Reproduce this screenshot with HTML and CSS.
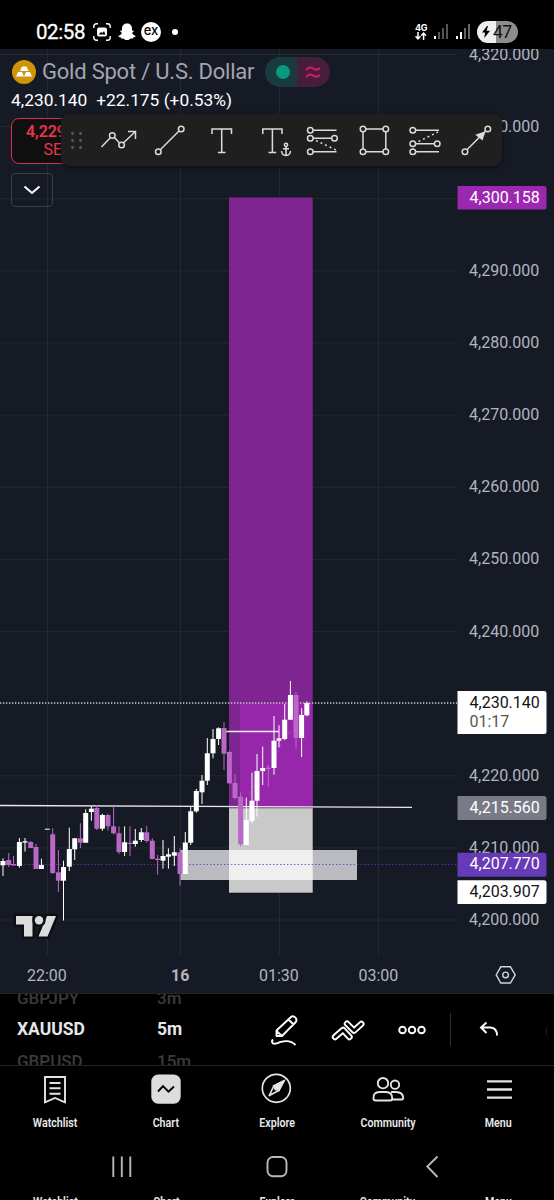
FILE: index.html
```html
<!DOCTYPE html>
<html lang="en">
<head>
<meta charset="utf-8">
<title>XAUUSD chart</title>
<link rel="stylesheet" href="styles.css">
</head>
<body>
<div class="phone">
  <header class="status">
    <span class="clock">02:58</span>
    <svg class="st-shot" width="18" height="18" viewBox="0 0 18 18" fill="none" stroke="#fff" stroke-width="1.4"><path d="M.8 5V3.5Q.8.8 3.5.8H5M13 .8h1.500Q17.200.8 17.200 3.500V5M17.200 13v1.500q0 2.700-2.700 2.700H13M5 17.200H3.500Q.8 17.200.8 14.500V13"/><rect x="4" y="4.500" width="10" height="9" rx="2" fill="#fff" stroke="none"/><path d="M5.500 11.500 8 9l1.500 1L11 8l1.500 3.500z" fill="#000" stroke="none"/></svg>
    <svg class="st-ghost" width="18" height="18" viewBox="0 0 18 18" fill="#fff"><path d="M9 .4c3 0 5 2 5 5v2.200c.6.2 1.400-.3 1.700.3.300.8-1.300 1.200-1.600 1.800.6 1.700 1.900 2.800 3.500 3.200.3.900-1.200 1.100-2.200 1.400l-.5 1.200c-1-.2-2-.2-2.900.4-1.900 1.600-4.100 1.600-6 0-.9-.6-1.900-.6-2.900-.4l-.5-1.200c-1-.3-2.500-.5-2.200-1.400 1.600-.4 2.900-1.500 3.500-3.200-.3-.6-1.900-1-1.600-1.800.3-.6 1.100-.1 1.700-.3V5.400c0-3 2-5 5-5z"/></svg>
    <span class="ex">ex</span>
    <i class="dot"></i>
    <span class="fourg"><b>4G</b><svg width="12" height="8" viewBox="0 0 12 8" fill="none" stroke="#fff" stroke-width="1.500"><path d="M3 0v7M.6 4.300 3 6.900l2.400-2.600M8.600 8V1M6.200 3.700 8.600 1.100 11 3.700"/></svg></span>
    <svg class="sig" width="16" height="16" viewBox="0 0 16 16"><path fill="#fff" d="M1 12h2v3H1z"/><path fill="#555" d="M5 8h2v7H5zM9 4h2v11H9zM13 0h2v15h-2z"/></svg>
    <svg class="sig" width="16" height="16" viewBox="0 0 16 16"><path fill="#fff" d="M1 12h2v3H1zM5 8h2v7H5z"/><path fill="#666" d="M9 4h2v11H9zM13 0h2v15h-2z"/></svg>
    <span class="battery"><svg width="8" height="12" viewBox="0 0 8 12"><path d="M5 0 0 6.500h3L2.300 12 8 4.800H4.600L6 0z"/></svg>47</span>
  </header>

  <main class="chart">
    <svg class="plot" width="554" height="945" viewBox="0 49 554 945">
      <g id="grid" class="grid"></g>
      <rect x="229" y="197.500" width="83.700" height="610.500" fill="#7e2591"/>
      <rect x="240" y="703" width="72.700" height="105" fill="#9727aa"/>
      <path d="M240 808 309 703" stroke="#ad67bd" stroke-dasharray="4 4" opacity=".6"/>
      <rect x="180.500" y="850" width="176.500" height="30" fill="#babbc0"/>
      <rect x="229" y="808" width="83.700" height="84.700" fill="#c9c9ca"/>
      <rect x="229" y="850" width="83.700" height="30" fill="#efeff0"/>
      <path d="M0 864.500H457" stroke="#673ab7" stroke-width="1" stroke-dasharray="1.500 2" opacity=".8"/>
      <path d="M0 805.500 412 807.300" stroke="#e8e8ea" stroke-width="1.300"/>
      <path d="M229 808H312.700" stroke="#87818c" stroke-width="1"/>
      <path d="M225 731.500H279" stroke="#eee" stroke-width="1.300"/>
      <path d="M0 703H457" stroke="#c6c7cb" stroke-width="1.300" stroke-dasharray="1.300 1.700"/>
      <g id="candles"></g>
      <g class="logo"><path d="M16 916H32.500V936.500H24V924.500H16zM47 916H56L47.500 936.500H38.500z"/><circle cx="39" cy="920.200" r="4.200"/></g>
      <g id="axis" class="axis"></g>
      <g class="tags">
        <path d="M457.500 186H544q2.500 0 2.500 2.500V207q0 2.500-2.500 2.500H457.500z" fill="#9c27b0"/><text x="469.500" y="202.800">4,300.158</text>
        <path d="M457.500 691H544q2.500 0 2.500 2.500V731.500q0 2.500-2.500 2.500H457.500z" fill="#fff"/><text x="469.500" y="707.600" class="dark">4,230.140</text><text x="469.500" y="726.600" class="mid">01:17</text>
        <path d="M457.500 796H544q2.500 0 2.500 2.500V817.500q0 2.500-2.500 2.500H457.500z" fill="#787b86"/><text x="469.500" y="812.700">4,215.560</text>
        <path d="M457.500 852.700H544q2.500 0 2.500 2.500V874.200q0 2.500-2.500 2.500H457.500z" fill="#673ab7"/><text x="469.500" y="869.200">4,207.770</text>
        <path d="M457.500 880.200H544q2.500 0 2.500 2.500V901.500q0 2.500-2.500 2.500H457.500z" fill="#fff"/><text x="469.500" y="896.800" class="dark">4,203.907</text>
      </g>
      <g class="axis"><text x="27" y="980.500">22:00</text><text x="171" y="980.500" class="bold">16</text><text x="259" y="980.500">01:30</text><text x="358.500" y="980.500">03:00</text></g>
      <g fill="none" stroke="#d1d4dc" stroke-width="1.400"><path d="M500.800 966.800H510.400L515.200 974.900 510.400 983H500.800L496.200 974.900z"/><circle cx="505.600" cy="974.900" r="2.800"/></g>
    </svg>

    <section class="legend">
      <div class="symbol">
        <svg width="24" height="24" viewBox="0 0 24 24"><circle cx="12" cy="12" r="12" fill="#cf9408"/><path fill="#fff" d="M10 6.500h4.500L16.500 11H8zM6 12h4l2 4.500H4zM14 12h4l2 4.500h-8z"/></svg>
        <h1>Gold Spot / U.S. Dollar</h1>
        <span class="pill"><i class="open"><b></b></i><i class="approx"><svg width="16" height="13" viewBox="0 0 16 13" fill="none" stroke="#d81b68" stroke-width="2"><path d="M1 4Q4.500 0 8 2.500T15 2M1 11Q4.500 7 8 9.500T15 9"/></svg></i></span>
      </div>
      <p class="quote"><span>4,230.140</span><span>+22.175 (+0.53%)</span></p>
      <div class="sell"><b>4,229</b><span>SELL</span></div>
      <div class="collapse"><svg width="18" height="10" viewBox="0 0 18 10" fill="none" stroke="#fff" stroke-width="2"><path d="M1.500 1.500 9 8l7.500-6.500"/></svg></div>
    </section>

    <nav class="tools">
      <svg width="441" height="52" viewBox="61 114 441 52" fill="none" stroke="#dbdbdb" stroke-width="1.500">
        <g fill="#5c5c5c" stroke="none"><circle cx="72.500" cy="133.500" r="1.400"/><circle cx="80.500" cy="133.500" r="1.400"/><circle cx="72.500" cy="140.500" r="1.400"/><circle cx="80.500" cy="140.500" r="1.400"/><circle cx="72.500" cy="147.500" r="1.400"/><circle cx="80.500" cy="147.500" r="1.400"/></g>
        <path d="M101.500 147 110 138M114.500 137.500 119.300 142.800M123.500 142.800 135.500 131.500M128 131.500H135.500V139"/><circle cx="112.300" cy="135.500" r="2.800"/><circle cx="121.600" cy="145" r="2.800"/>
        <path d="M160.500 149.500 179 131"/><circle cx="158.300" cy="151.700" r="2.800"/><circle cx="181.200" cy="129" r="2.800"/>
        <path d="M212 134V129H231.500V134M221.700 129V152.500M218 152.500H225.500"/>
        <path d="M262.800 134V129H282V134M272.400 129V152.500M268.500 152.500H276.200"/>
        <g><circle cx="286" cy="144.800" r="1.600"/><path d="M286 146.400V155.500M283 148.700H289M281.500 151Q282 155.500 286 155.500T290.500 151"/></g>
        <path d="M313 130.300H336.500M313 138.300H331.500M313 151.700H336.500"/><path d="M316 140.500 336 150" stroke-dasharray="2 3"/>
        <path d="M365.800 129H383M363 132V149M365.800 151.700H383M385.800 132V149"/><circle cx="363" cy="129" r="2.800"/><circle cx="385.800" cy="129" r="2.800"/><circle cx="363" cy="151.700" r="2.800"/><circle cx="385.800" cy="151.700" r="2.800"/>
        <path d="M416 130.300H439M416 143.700H434M416 151.700H439"/><path d="M418.500 141.500 438 132" stroke-dasharray="2 3"/>
        <g fill="#1f1f1f"><circle cx="310.300" cy="130.300" r="2.800"/><circle cx="310.300" cy="138.300" r="2.800"/><circle cx="334.500" cy="138.300" r="2.800"/><circle cx="310.300" cy="151.700" r="2.800"/><circle cx="412.800" cy="130.300" r="2.800"/><circle cx="412.800" cy="143.700" r="2.800"/><circle cx="437.200" cy="143.700" r="2.800"/><circle cx="412.800" cy="151.700" r="2.800"/></g>
        <path d="M467.200 149.500 485.500 131.300"/><circle cx="465" cy="151.700" r="2.800"/><circle cx="487.800" cy="129" r="2.800"/><path d="M485.500 131.300 482.500 140.500 475.300 134.700z" fill="#dbdbdb" stroke="none"/>
      </svg>
    </nav>
  </main>

  <section class="picker">
    <div class="wheel symbols"><span>GBPJPY</span><strong>XAUUSD</strong><span>GBPUSD</span></div>
    <div class="wheel frames"><span>3m</span><strong>5m</strong><span>15m</span></div>
    <div class="actions">
      <svg width="28" height="32" viewBox="270 1014 28 32" fill="none" stroke="#fff" stroke-width="1.900" stroke-linejoin="round"><path d="M276.500 1036V1030.500L291 1017Q293 1015.200 295.200 1017.400T295.800 1022L282 1036zM276.500 1031 282 1036M288.500 1019.500 293.500 1024.500" /><path d="M273 1039.500Q271 1041.500 273 1043.500 275 1044.500 280 1042.200 290 1039 295.500 1045"/></svg>
      <svg width="34" height="22" viewBox="331 1018 34 22" fill="none" stroke-linecap="round" stroke-linejoin="round"><path d="M347 1022.700 354 1029.700 361.300 1023" stroke="#fff" stroke-width="6.400"/><path d="M347 1022.700 354 1029.700 361.300 1023" stroke="#000" stroke-width="2.600"/><path d="M335 1036 343 1029 349.500 1036" stroke="#fff" stroke-width="6.400"/><path d="M335 1036 343 1029 349.500 1036" stroke="#000" stroke-width="2.600"/></svg>
      <svg width="28" height="10" viewBox="0 0 28 10" fill="none" stroke="#fff" stroke-width="1.900"><circle cx="4.500" cy="5" r="3.300"/><circle cx="14" cy="5" r="3.300"/><circle cx="23.500" cy="5" r="3.300"/></svg>
      <i class="divider"></i>
      <svg class="undo" width="20" height="18" viewBox="0 0 20 18" fill="none" stroke="#fff" stroke-width="1.900"><path d="M7.500 1.500 2 6.500 7.500 12M2 6.500H11.500Q18 7 18 14.500"/></svg>
      <i class="redo"></i>
    </div>
  </section>

  <nav class="tabs">
    <a><svg width="32" height="32" viewBox="0 0 32 32" fill="none" stroke="#e4e4e4" stroke-width="1.900"><path d="M6 4H26V29.300L16 25 6 29.300zM10.500 10H21.500M10.500 15.300H21.500M10.500 20.700H21.500"/></svg><span>Watchlist</span></a>
    <a><svg width="32" height="32" viewBox="0 0 32 32" fill="none"><rect x="1.300" y="1.500" width="29.400" height="29.300" rx="7" fill="#dcdcdc"/><path d="M8 18.500 13 13.200 18.500 18.700 24 13.500" stroke="#000" stroke-width="1.900"/></svg><span>Chart</span></a>
    <a><svg width="32" height="32" viewBox="0 0 32 32" fill="none" stroke="#e4e4e4" stroke-width="1.700"><circle cx="15.300" cy="15.300" r="14"/><path d="M22.800 8 17.800 17.500 8.300 22.500 12.800 13z" stroke-linejoin="round"/><path d="M22.800 8 17.800 17.500 12.800 13z" fill="#e4e4e4"/><circle cx="15.300" cy="15.300" r="1.500" fill="#e4e4e4"/></svg><span>Explore</span></a>
    <a><svg width="34" height="32" viewBox="0 0 34 32" fill="none" stroke="#e4e4e4" stroke-width="1.900"><circle cx="12" cy="10.200" r="5.200"/><path d="M2.500 25.500Q2 19.200 8.500 19H15Q21.500 19.200 21.200 25.500Q21.200 27.500 19 27.500H4.700Q2.500 27.500 2.500 25.500z"/><circle cx="24" cy="11.700" r="4.200"/><path d="M20 19H25Q32 19.200 32.200 25Q32.200 26.500 30.500 26.500H21"/></svg><span>Community</span></a>
    <a><svg width="32" height="32" viewBox="0 0 32 32" stroke="#e4e4e4" stroke-width="2.300"><path d="M4 8.300H29M4 16.500H29M4 24.600H29"/></svg><span>Menu</span></a>
  </nav>

  <nav class="system">
    <svg width="554" height="60" viewBox="0 1136 554 60" fill="none" stroke="#b8b8b8" stroke-width="1.900"><path d="M113.300 1156.500V1177M121.800 1156.500V1177M130.300 1156.500V1177"/><rect x="267.500" y="1157" width="19" height="19.300" rx="5.500"/><path d="M437.500 1156.500 427.300 1166.500 437.500 1177"/></svg>
  </nav>
  <div class="tabs-edge"><span>Watchlist</span><span>Chart</span><span>Explore</span><span>Community</span><span>Menu</span></div>
</div>
<script src="chart.js"></script>
</body>
</html>
```

FILE: styles.css
```css
* { box-sizing: border-box; }
body { margin: 0; background: #000; font-family: Roboto, sans-serif; color: #fff; }
.phone { width: 554px; height: 1200px; overflow: hidden; display: flex; flex-direction: column; background: #000; }
svg { display: block; flex: none; }
i { font-style: normal; }

.status { height: 49px; padding: 14px 0 0 36px; display: flex; align-items: center; flex: none; }
.clock { font-size: 20.500px; width: 57px; font-weight: 400; -webkit-text-stroke: .3px #fff; letter-spacing: -.4px; }
.st-ghost { margin-left: 7px; }
.ex { width: 20px; height: 20px; margin-left: 5px; border-radius: 50%; background: #fff; color: #000; font: 500 13px/17px Inter, sans-serif; text-align: center; }
.dot { width: 6px; height: 6px; border-radius: 50%; background: #fff; margin-left: 11px; }
.fourg { margin-left: 236px; width: 14px; display: flex; flex-direction: column; align-items: center; }
.fourg b { font: 700 9px/9px Inter, sans-serif; letter-spacing: -.4px; }
.sig { margin-left: 5px; }
.sig + .sig { margin-left: 6px; }
.battery { margin-left: 6px; width: 41px; height: 22px; border-radius: 11px; background: linear-gradient(90deg, #eee 47%, #8d8d8d 47%); color: #111; display: flex; align-items: center; gap: 3px; padding-left: 5px; font-size: 17.500px; letter-spacing: -.5px; }

.chart { position: relative; height: 945px; flex: none; background: #161a25; border-bottom: 1px solid #26272c; }
.plot { position: absolute; left: 0; top: 0; font-size: 16px; }
.grid { stroke: #242833; stroke-width: 1; }
.axis { fill: #b2b5be; }
.bold { font-weight: 700; }
.tags { fill: #fff; }
.dark { fill: #131313; }
.mid { fill: #555; }
.logo { fill: #dcdcdc; stroke: #0d0f14; stroke-width: 5px; paint-order: stroke; stroke-linejoin: round; }
.up { fill: #fff; }
.down { fill: #ba68c8; }

.legend { position: relative; padding: 10px 0 0 12px; }
.symbol { display: flex; align-items: center; height: 26px; }
.symbol h1 { margin: 0 0 0 6px; width: 212px; font-size: 22px; letter-spacing: -.22px; font-weight: 400; line-height: 26px; color: #a3a5b1; white-space: nowrap; }
.pill { margin-left: 11px; display: flex; height: 30px; border-radius: 15px; overflow: hidden; }
.pill i { display: flex; align-items: center; justify-content: center; }
.open { width: 32px; padding-left: 4px; background: #193a3e; }
.open b { width: 14px; height: 14px; border-radius: 50%; background: #089981; }
.approx { width: 33px; background: #461d3b; padding-right: 2px; }
.quote { margin: 5px 0 0 -1px; display: flex; gap: 9px; font-size: 17.350px; line-height: 21px; }
.sell { margin: 7px 0 0 -1px; width: 100px; height: 46px; border: 1px solid #d2324b; border-radius: 8px; background: #101010; color: #e8374a; font-size: 16px; line-height: 18px; padding: 4px 0 0 14px; display: flex; flex-direction: column; }
.sell b { font-weight: 500; -webkit-text-stroke: .2px #e8374a; }
.sell span { padding-left: 17.500px; }
.collapse { margin: 9px 0 0 -1px; width: 42px; height: 34px; border: 1px solid #3b3e46; border-radius: 4px; display: flex; align-items: center; justify-content: center; }
.tools { position: absolute; left: 61px; top: 65px; width: 441px; height: 52px; border-radius: 8px; background: #1f1f1f; box-shadow: 0 1px 4px #0008; }

.picker { height: 72px; flex: none; display: flex; border-bottom: 1px solid #242424; overflow: hidden; }
.wheel { height: 72px; display: flex; flex-direction: column; justify-content: center; font-size: 17.500px; line-height: 31.500px; padding-left: 17px; font-weight: 500; color: #3b3b3b; }
.wheel span, .wheel strong { flex: none; }
.wheel span { font-size: 17px; }
.wheel strong { font-weight: 700; color: #e6e6e6; }
.symbols { width: 140px; }
.frames { width: 130px; }
.actions { display: flex; align-items: center; }
.actions svg + svg { margin-left: 33px; }
.divider { width: 1px; height: 33px; background: #303030; margin: 0 28px 0 24px; }
.redo { width: 4px; height: 10px; border-left: 1px solid #1c1c1c; border-radius: 4px 0 0 0; margin-left: 47px; }

.tabs { height: 70px; flex: none; display: grid; grid-template-columns: repeat(5, 110.800px); padding-top: 7px; }
.tabs a { display: flex; flex-direction: column; align-items: center; font-size: 12px; font-weight: 600; line-height: 16px; gap: 10px; color: #e9e9e9; }
.tabs span, .tabs-edge span { transform: scaleX(.89); }
.system { height: 60px; flex: none; }
.tabs-edge { height: 4px; flex: none; overflow: hidden; display: grid; grid-template-columns: repeat(5, 110.800px); text-align: center; font-size: 12px; font-weight: 600; line-height: 12px; color: #e9e9e9; }
```

FILE: chart.js
```js
const NS = 'http://www.w3.org/2000/svg';
const TOP_PRICE = 4320, TOP_Y = 54.5, STEP = 72.13;

function add(parent, tag, attrs, text) {
  const el = document.createElementNS(NS, tag);
  for (const k in attrs) el.setAttribute(k, attrs[k]);
  if (text) el.textContent = text;
  parent.appendChild(el);
}

const grid = document.getElementById('grid');
const axis = document.getElementById('axis');
for (let i = 0; i <= 12; i++) {
  const y = TOP_Y + i * STEP;
  add(grid, 'line', { x1: 0, x2: 456, y1: y, y2: y });
  if (i === 2 || i === 9) continue;
  const price = (TOP_PRICE - i * 10).toLocaleString('en-US') + '.000';
  add(axis, 'text', { x: 469, y: y + 5 }, price);
}
for (const x of [47.5, 180.5, 279.5, 378.5]) add(grid, 'line', { x1: x, x2: x, y1: 49, y2: 955 });

// [centre x, wick top, body top, body bottom, wick bottom, rising]
const candles = [
  [3, 858.3, 861, 865.3, 876, 1], [8.7, 853, 860, 865, 867, 0], [13.5, 856, 864, 865.5, 865.5, 0],
  [19.4, 838, 842, 866, 867.7, 1], [25, 838, 841.3, 842.6, 851.6, 1], [30.7, 841, 842, 848, 848, 0],
  [36, 844, 847, 869, 869, 0], [41.4, 858.7, 865, 869, 869, 1], [47.3, 829, 828.7, 829.7, 829, 1],
  [52.7, 828.3, 834.3, 873, 874, 0], [58.4, 850, 872.3, 880.7, 892, 0], [63.5, 860.7, 867, 880.7, 920.5, 1],
  [69.3, 827.7, 849, 866.7, 871, 1], [74.7, 838, 838.3, 849.3, 860, 1], [80.4, 823.3, 838.3, 842.7, 848, 0],
  [85.7, 809.3, 813, 842.7, 842.7, 1], [91.4, 806.3, 808.7, 812, 820.7, 1], [96.8, 805, 808, 828.7, 830, 0],
  [102.4, 813.7, 815, 828.7, 830.7, 1], [108, 813.7, 815, 826.3, 830.7, 0], [113.6, 806.3, 826.3, 833.3, 834.3, 0],
  [119, 826.3, 833.3, 852, 854, 0], [124.6, 826.3, 842.3, 852, 856, 1], [130, 826.3, 842.7, 844, 856, 0],
  [135.3, 829, 840.7, 844, 846.7, 1], [141.3, 828, 832.3, 840, 842, 1], [146.7, 826, 832.3, 841, 842.7, 0],
  [152.3, 838.3, 840.7, 859, 859.3, 0], [157.6, 855, 858.7, 860, 874.7, 0], [163, 840, 856, 860.7, 868.7, 1],
  [168.4, 848.3, 854.3, 856.7, 868.7, 1], [174.3, 836, 852.3, 855.7, 866, 1], [180, 848.3, 852.3, 874, 885.7, 0],
  [185.3, 832, 842.5, 874, 874, 1], [190.7, 806.5, 811.3, 842.7, 845, 1], [196.3, 789, 791, 811.3, 812.7, 1],
  [202, 775, 780.7, 792.3, 804, 1], [207.3, 738, 753.3, 780.7, 785, 1], [213, 729, 739, 753.3, 758.3, 1],
  [218.6, 727.3, 728.3, 739, 745, 1], [224, 722, 728, 753.7, 770, 0], [229.4, 750.7, 752, 783.3, 784, 0],
  [235, 774, 783, 798, 799.3, 0], [240.6, 792.3, 796.7, 844.3, 846.3, 0], [246.3, 797.7, 820, 845, 845, 1],
  [252, 772.7, 800.7, 821, 823.3, 1], [257, 754, 771, 800.7, 816.7, 1], [262.7, 746.7, 768, 771, 785, 1],
  [268.3, 765, 767.7, 769, 786.7, 0], [274, 716, 740.7, 768, 774.7, 1], [279, 725.3, 738.3, 740.7, 747.3, 1],
  [284.7, 704, 719.7, 739, 740, 1], [290.4, 681, 695, 719.7, 720, 1], [296, 692, 695, 738, 749, 0],
  [301.6, 708.3, 715, 738, 757, 1], [306.8, 701.3, 703, 715.3, 716.3, 1]
];
const layer = document.getElementById('candles');
for (const [x, high, top, bottom, low, up] of candles) {
  const cls = up ? 'up' : 'down';
  add(layer, 'rect', { x: x - 0.5, y: high, width: 1, height: Math.max(low - high, 0), class: cls });
  add(layer, 'rect', { x: x - 2.5, y: top, width: 5, height: bottom - top, class: cls });
}
```
